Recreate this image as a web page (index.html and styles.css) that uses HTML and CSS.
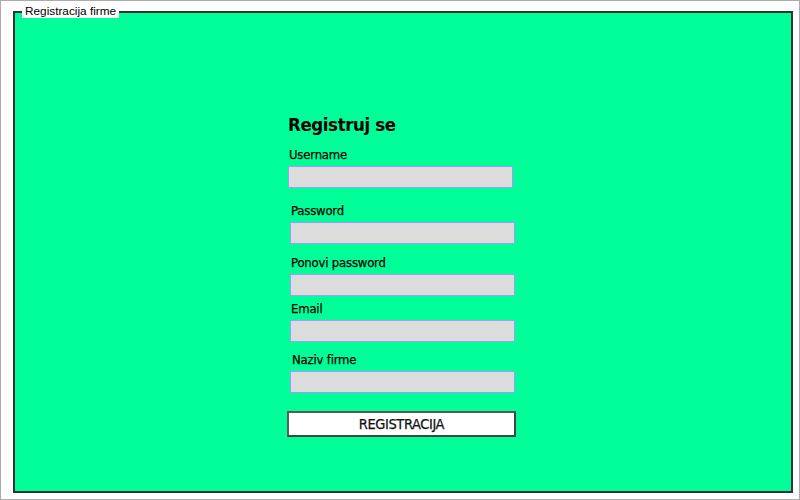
FILE: index.html
```html
<!DOCTYPE html>
<html>
<head>
<meta charset="utf-8">
<title>Registracija firme</title>
<link rel="stylesheet" href="styles.css">
</head>
<body>
<div class="frame">
  <fieldset class="box">
    <legend class="box-legend">Registracija firme</legend>
    <form class="reg-form">
      <h2 class="reg-title">Registruj se</h2>
      <div class="field field--first">
        <label class="field-label">Username</label>
        <input class="field-input" type="text">
      </div>
      <div class="field field--shift field--gap15">
        <label class="field-label">Password</label>
        <input class="field-input" type="password">
      </div>
      <div class="field field--shift field--gap11">
        <label class="field-label">Ponovi password</label>
        <input class="field-input" type="password">
      </div>
      <div class="field field--shift field--gap5">
        <label class="field-label">Email</label>
        <input class="field-input" type="text">
      </div>
      <div class="field field--shift field--gap10">
        <label class="field-label field-label--nudge">Naziv firme</label>
        <input class="field-input" type="text">
      </div>
      <button class="reg-button" type="button">REGISTRACIJA</button>
    </form>
  </fieldset>
</div>
</body>
</html>
```
FILE: styles.css
```css
html, body {
  margin: 0;
  padding: 0;
  background: #ffffff;
}

.frame {
  width: 800px;
  height: 500px;
  box-sizing: border-box;
  border: 1px solid #ababab;
  padding: 4px 6px 6px 12px;
}

.box {
  margin: 0;
  height: 100%;
  box-sizing: border-box;
  border: 2px solid #333333;
  background: #00ff99;
  padding: 0;
  min-width: 0;
}

.box-legend {
  margin-left: 7px;
  padding: 0 3px;
  background: #ffffff;
  font-family: "Liberation Sans", Arial, sans-serif;
  font-size: 11.8px;
  line-height: 13px;
  color: #000000;
}

.reg-form {
  width: 230px;
  margin: 0 auto;
  padding-top: 93px;
  font-family: "DejaVu Sans Condensed", "DejaVu Sans", sans-serif;
  font-stretch: condensed;
  color: #000000;
}

.reg-title {
  margin: 0;
  padding: 1px 0 0 0;
  height: 25px;
  font-size: 18.5px;
  line-height: 26px;
  font-weight: bold;
  letter-spacing: -0.4px;
}

.field {
  display: flex;
  flex-direction: column;
  gap: 3px;
}

.field--first { margin-top: 10px; }
.field--gap15 { margin-top: 15px; }
.field--gap11 { margin-top: 11px; }
.field--gap5 { margin-top: 5px; }
.field--gap10 { margin-top: 10px; }

.field--shift {
  margin-left: 2px;
}

.field-label {
  display: block;
  padding: 0 0 0 1px;
  height: 16px;
  font-size: 13px;
  line-height: 16px;
  letter-spacing: -0.2px;
  -webkit-text-stroke: 0.25px #000;
}

.field-label--nudge {
  padding-left: 2px;
}

.field-input {
  display: block;
  width: 225px;
  height: 22px;
  box-sizing: border-box;
  margin: 0;
  padding: 0 3px;
  border: 1px solid #9d9dff;
  background: #dcdcdc;
  font-size: 13px;
}

.reg-button {
  display: block;
  margin: 18px 0 0 -1px;
  width: 229px;
  height: 26px;
  box-sizing: border-box;
  padding: 0;
  background: #ffffff;
  border: 2px solid;
  border-color: #5a5a5a #444444 #444444 #5a5a5a;
  font-family: "DejaVu Sans Condensed", "DejaVu Sans", sans-serif;
  font-stretch: condensed;
  font-size: 14.5px;
  letter-spacing: -0.4px;
  -webkit-text-stroke: 0.25px #111;
  color: #111111;
  line-height: 20px;
}
```
